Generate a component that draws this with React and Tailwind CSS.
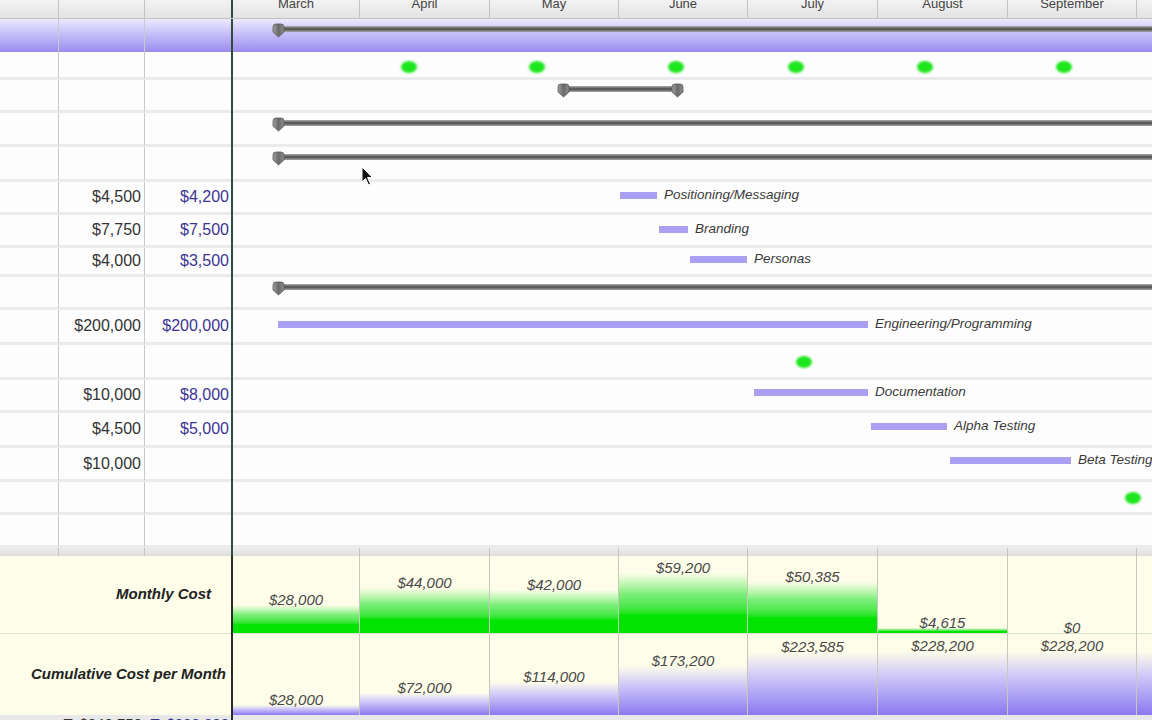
import React from "react";

// timeline starts right after the dark split line at x=233
const T0 = 233;

const months = [
  { name: "March", w: "w-[127px]", m: "$28,000", mv: 28000, c: "$28,000", cv: 28000 },
  { name: "April", w: "w-[130px]", m: "$44,000", mv: 44000, c: "$72,000", cv: 72000 },
  { name: "May", w: "w-[129px]", m: "$42,000", mv: 42000, c: "$114,000", cv: 114000 },
  { name: "June", w: "w-[129px]", m: "$59,200", mv: 59200, c: "$173,200", cv: 173200 },
  { name: "July", w: "w-[130px]", m: "$50,385", mv: 50385, c: "$223,585", cv: 223585 },
  { name: "August", w: "w-[130px]", m: "$4,615", mv: 4615, c: "$228,200", cv: 228200 },
  { name: "September", w: "w-[129px]", m: "$0", mv: 0, c: "$228,200", cv: 228200 },
  { name: "October", w: "w-[129px]", m: "", mv: 0, c: "", cv: 228200 },
];

const rows = [
  { h: "h-[33px]", sel: true, summary: { x: 278, y: 10 } },
  { h: "h-[28px]", milestones: [409, 537, 676, 796, 925, 1064], my: 15 },
  { h: "h-[33px]", summary: { x: 563, to: 677, y: 9 } },
  { h: "h-[34px]", summary: { x: 278, y: 10 } },
  { h: "h-[35px]", summary: { x: 278, y: 10 } },
  { h: "h-[33px]", est: "$4,500", act: "$4,200", task: { x: 620, w: 37, y: 13, label: "Positioning/Messaging" } },
  { h: "h-[33px]", est: "$7,750", act: "$7,500", task: { x: 659, w: 29, y: 14, label: "Branding" } },
  { h: "h-[29px]", est: "$4,000", act: "$3,500", task: { x: 690, w: 57, y: 11, label: "Personas" } },
  { h: "h-[33px]", summary: { x: 278, y: 10 } },
  { h: "h-[35px]", est: "$200,000", act: "$200,000", task: { x: 278, w: 590, y: 14, label: "Engineering/Programming" } },
  { h: "h-[35px]", milestones: [804], my: 17 },
  { h: "h-[33px]", est: "$10,000", act: "$8,000", task: { x: 754, w: 114, y: 12, label: "Documentation" } },
  { h: "h-[35px]", est: "$4,500", act: "$5,000", task: { x: 871, w: 76, y: 13, label: "Alpha Testing" } },
  { h: "h-[34px]", est: "$10,000", task: { x: 950, w: 121, y: 12, label: "Beta Testing" } },
  { h: "h-[33px]", milestones: [1133], my: 16 },
  { h: "h-[33px]" },
];

const Cap = ({ left, top }) => (
  <svg className="absolute" width="13" height="15" viewBox="0 0 13 15" style={{ left, top }}>
    <defs>
      <linearGradient id="capg" x1="0" y1="0" x2="1" y2="0">
        <stop offset="0" stopColor="#a0a0a0" />
        <stop offset="0.5" stopColor="#6a6a6a" />
        <stop offset="1" stopColor="#8e8e8e" />
      </linearGradient>
    </defs>
    <path d="M1 4 Q1 1 4 1 H9 Q12 1 12 4 V9 L6.5 14 L1 9 Z" fill="url(#capg)" stroke="#5a5a5a" strokeWidth="0.8" />
  </svg>
);

const Summary = ({ x, to, y }) => {
  const left = x - T0;
  return (
    <>
      <div
        className="absolute h-[6px] bg-linear-to-b from-[#b0b0b0] via-[#4c4c4c] to-[#a8a8a8]"
        style={to ? { left, top: y - 3, width: to - x } : { left, top: y - 3, right: 0 }}
      />
      <Cap left={left - 6} top={y - 6} />
      {to && <Cap left={to - T0 - 6} top={y - 6} />}
    </>
  );
};

const Task = ({ x, w, y, label }) => (
  <div className="absolute flex items-center h-[16px]" style={{ left: x - T0, top: y - 8 }}>
    <div className="h-[7px] bg-[#ab9ff2]" style={{ width: w }} />
    <span className="ml-[7px] text-[13.5px] italic text-[#3a3a3a] whitespace-nowrap">{label}</span>
  </div>
);

const Milestone = ({ x, y }) => (
  <div
    className="absolute w-[16px] h-[12px] rounded-[50%] bg-[#1ee61e] blur-[1px]"
    style={{ left: x - T0 - 8, top: y - 6 }}
  />
);

const sep = "border-b-[3px] border-b-[#ebebeb]";

const Row = ({ row }) => {
  const line = row.sel ? "" : sep;
  return (
    <div className={`flex ${row.h} ${row.sel ? "bg-linear-to-b from-[#ece9fd] to-[#9b8bef]" : ""}`}>
      <div className={`w-[59px] shrink-0 border-r border-r-[#c9c9c9] ${line}`} />
      <div className={`w-[86px] shrink-0 border-r border-r-[#c9c9c9] flex items-center justify-end pr-[3px] text-[16px] text-[#333] ${line}`}>
        {row.est}
      </div>
      <div className={`w-[86px] shrink-0 flex items-center justify-end pr-[2px] text-[16px] text-[#3b3493] ${line}`}>
        {row.act}
      </div>
      <div className="w-[2px] shrink-0 bg-[#2f4c3d]" />
      <div className={`relative flex-1 ${line}`}>
        {row.summary && <Summary {...row.summary} />}
        {row.task && <Task {...row.task} />}
        {row.milestones && row.milestones.map((x) => <Milestone key={x} x={x} y={row.my} />)}
      </div>
    </div>
  );
};

export default function App() {
  return (
    <div className="relative w-[1152px] h-[720px] overflow-hidden bg-[#fdfdfd] font-['Liberation_Sans',Arial,sans-serif]">
      {/* month header, cut at the top */}
      <div className="flex h-[19px] bg-linear-to-b from-[#f3f3f3] to-[#e3e3e3] border-b border-b-[#c4c4c4]">
        <div className="w-[59px] shrink-0 border-r border-r-[#c4c4c4]" />
        <div className="w-[86px] shrink-0 border-r border-r-[#c4c4c4]" />
        <div className="w-[86px] shrink-0" />
        <div className="w-[2px] shrink-0 bg-[#2f4c3d]" />
        {months.map((m) => (
          <div key={m.name} className={`${m.w} shrink-0 border-r border-r-[#c4c4c4] flex justify-center`}>
            <span className="-mt-[4px] text-[13px] leading-[15px] text-[#444]">{m.name}</span>
          </div>
        ))}
      </div>

      {rows.map((row, i) => (
        <Row key={i} row={row} />
      ))}

      {/* splitter between chart and cost panel */}
      <div className="flex h-[8px] bg-linear-to-b from-[#ededed] to-[#dedede]">
        <div className="w-[59px] shrink-0 border-r border-r-[#c4c4c4]" />
        <div className="w-[86px] shrink-0 border-r border-r-[#c4c4c4]" />
        <div className="w-[86px] shrink-0" />
        <div className="w-[2px] shrink-0 bg-[#2f4c3d]" />
        {months.map((m) => (
          <div key={m.name} className={`${m.w} shrink-0 border-r border-r-[#c4c4c4]`} />
        ))}
      </div>

      {/* cost panel */}
      <div className="flex h-[159px] bg-[#fdfde9]">
        <div className="w-[231px] shrink-0 flex flex-col">
          <div className="h-[78px] border-b border-b-[#e4e4cc] flex items-center justify-end pr-[20px] text-[15px] font-bold italic text-[#222]">
            Monthly Cost
          </div>
          <div className="h-[81px] flex items-center justify-end pr-[5px] text-[15px] font-bold italic text-[#222]">
            Cumulative Cost per Month
          </div>
        </div>
        <div className="w-[2px] shrink-0 bg-[#2a2a2a]" />
        {months.map((m) => (
          <div key={m.name} className={`${m.w} shrink-0 flex flex-col border-r border-r-[#c8c8bc]`}>
            <div className="h-[78px] flex flex-col justify-end border-b border-b-[#d6e6c8]">
              <span className="-mb-[3px] relative text-center text-[15px] leading-[16px] italic text-[#4a4a4a]">{m.m}</span>
              <div
                className="w-full bg-linear-to-b from-[#fdfde9] via-[#7aee7a] via-35% to-[#00e400] to-70%"
                style={{ height: Math.round((m.mv / 59200) * 60) }}
              />
            </div>
            <div className="h-[81px] flex flex-col justify-end">
              <span className="-mb-[3px] relative text-center text-[15px] leading-[16px] italic text-[#4a4a4a]">{m.c}</span>
              <div
                className="w-full bg-linear-to-b from-[#fdfde9] via-[#cfc6f8] via-40% to-[#8c78ef]"
                style={{ height: Math.round((m.cv / 228200) * 62) + 2 }}
              />
            </div>
          </div>
        ))}
      </div>

      {/* totals strip, mostly below the fold */}
      <div className="flex h-[20px] bg-[#e8e8e8]">
        <div className="w-[59px] shrink-0" />
        <div className="w-[86px] shrink-0 text-right pr-[3px] text-[15px] leading-[18px] text-[#333]">T: $240,750</div>
        <div className="w-[86px] shrink-0 text-right pr-[2px] text-[15px] leading-[18px] text-[#3b3493]">T: $228,200</div>
        <div className="w-[2px] shrink-0 bg-[#2a2a2a]" />
      </div>

      {/* mouse pointer */}
      <svg className="absolute left-[361px] top-[166px]" width="13" height="21" viewBox="0 0 13 21">
        <path d="M1 1 L1 16 L4.5 12.5 L7.5 19 L9.5 18 L6.5 11.5 L11.5 11.5 Z" fill="#111" stroke="#fff" strokeWidth="1" />
      </svg>
    </div>
  );
}
